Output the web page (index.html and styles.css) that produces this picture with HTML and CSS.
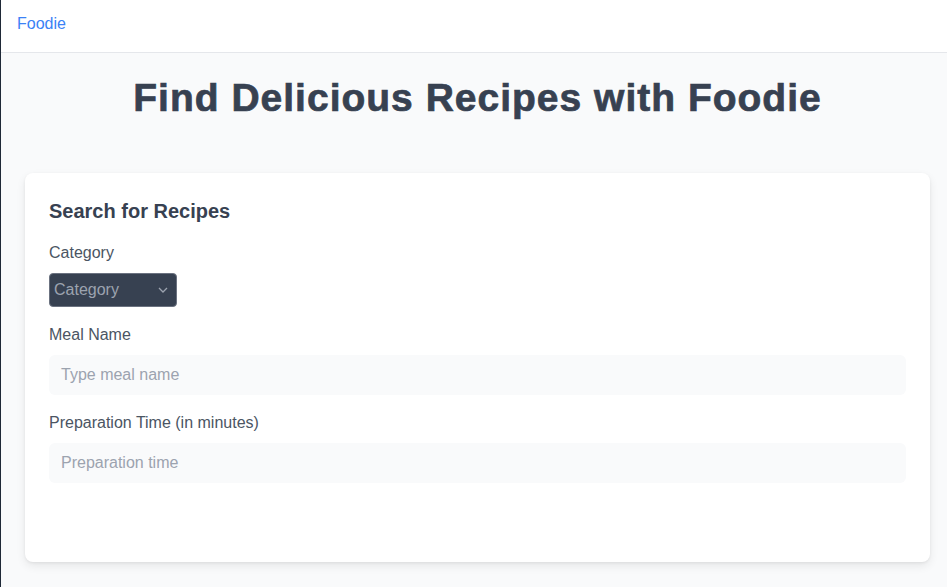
FILE: index.html
```html
<!DOCTYPE html>
<html>
<head>
<meta charset="utf-8">
<link rel="stylesheet" href="styles.css">
</head>
<body>
<div class="page">
  <header class="topbar">
    <a class="brand" href="#">Foodie</a>
  </header>
  <main class="main">
    <h1 class="title">Find Delicious Recipes with Foodie</h1>
    <section class="card">
      <h2 class="card-title">Search for Recipes</h2>
      <div class="field">
        <label class="label">Category</label>
        <div class="select">
          <span class="select-text">Category</span>
          <svg class="chev" width="10" height="6" viewBox="0 0 10 6"><path d="M1 1l4 4 4-4" fill="none" stroke="#9ca3af" stroke-width="1.3"/></svg>
        </div>
      </div>
      <div class="field">
        <label class="label">Meal Name</label>
        <div class="input">Type meal name</div>
      </div>
      <div class="field">
        <label class="label">Preparation Time (in minutes)</label>
        <div class="input">Preparation time</div>
      </div>
    </section>
  </main>
</div>
</body>
</html>
```
FILE: styles.css
```css
* { box-sizing: border-box; }
html, body { margin: 0; padding: 0; }
body {
  font-family: "Liberation Sans", Arial, sans-serif;
  background: #f9fafb;
  color: #374151;
}
.page {
  min-height: 587px;
  border-left: 1px solid #1f2937;
  background: #f9fafb;
}
.topbar {
  height: 53px;
  background: #fff;
  border-bottom: 1px solid #e5e7eb;
  display: flex;
  align-items: center;
  padding: 0 0 5px 16px;
}
.brand {
  color: #3b82f6;
  text-decoration: none;
  font-size: 16px;
}
.main {
  padding: 25px 17px 24px 24px;
}
.title {
  margin: 0;
  text-align: center;
  font-size: 39px;
  line-height: 40px;
  font-weight: 700;
  letter-spacing: 1px;
  -webkit-text-stroke: 0.7px #374151;
  color: #374151;
}
.card {
  margin-top: 55px;
  background: #fff;
  border-radius: 8px;
  box-shadow: 0 4px 10px rgba(0,0,0,0.08), 0 1px 3px rgba(0,0,0,0.06);
  padding: 26px 24px 80px 24px;
  height: 389px;
}
.card-title {
  margin: 0 0 18px 0;
  font-size: 20px;
  line-height: 24px;
  font-weight: 700;
  color: #374151;
}
.field { margin-bottom: 16px; }
.label {
  display: block;
  font-size: 16px;
  line-height: 24px;
  color: #4b5563;
  margin-bottom: 8px;
}
.select {
  width: 128px;
  height: 34px;
  background: #374151;
  border: 1px solid #6b7280;
  border-radius: 4px;
  display: flex;
  align-items: center;
  justify-content: space-between;
  padding: 0 8px 0 4px;
  margin-top: 8px;
}
.select-text { color: #9ca3af; font-size: 16px; }
.input {
  height: 40px;
  background: #f9fafb;
  border-radius: 6px;
  padding: 0 12px;
  display: flex;
  align-items: center;
  color: #9ca3af;
  font-size: 16px;
}
```
